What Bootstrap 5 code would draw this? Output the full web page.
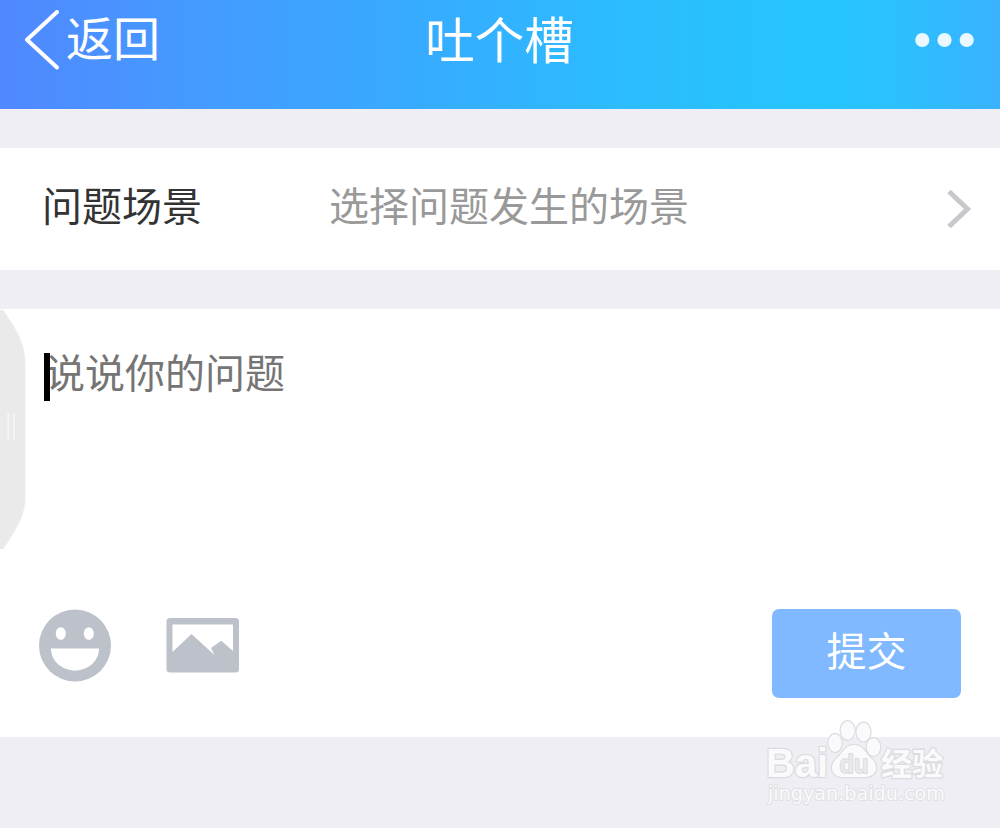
<!DOCTYPE html>
<html lang="zh-CN">
<head>
  <meta charset="UTF-8">
  <title>吐个槽</title>
  <meta name="viewport" content="width=device-width, initial-scale=1" />
  <!-- Bootstrap CSS -->
  <link rel="stylesheet" href="https://cdn.jsdelivr.net/npm/bootstrap@5.3.0/dist/css/bootstrap.min.css">
  <style>
    body {
      background-color: #efeef4;
      font-family: "Noto Sans CJK SC", sans-serif;
      font-size: 40px;
      line-height: 60px;
      min-height: 828px;
      overflow: hidden;
    }
    .topbar {
      height: 109px;
      padding: 10px 25px 39px 24px;
      color: #fff;
      background: linear-gradient(90deg, #5088ff 0%, #4698ff 17%, #38aaff 40%, #2cbcff 62%, #25c5ff 82%, #2bc1ff 89%, #3ab2ff 100%);
    }
    .back-link {
      font-size: 47px;
      line-height: 51px;
      gap: 6px;
    }
    .topbar-title {
      font-size: 49.5px;
      line-height: 55px;
    }
    .scene-row {
      height: 122px;
      margin-top: 39px;
      padding: 0 28px 0 42px;
      color: #333;
    }
    .scene-label { width: 287px; padding-bottom: 11px; }
    .scene-value { color: #999; padding-bottom: 11px; }
    .feedback-box {
      height: 428px;
      margin-top: 39px;
      padding: 32px 39px 39px;
    }
    .feedback-text { color: #757575; padding-left: 6px; }
    .caret {
      left: 5px;
      top: 12px;
      width: 6px;
      height: 48px;
      background: #000;
    }
    .btn-submit {
      width: 189px;
      height: 89px;
      padding: 0 0 10px;
      border: 0;
      border-radius: 7px;
      font-size: 40px;
      color: #fff;
      background-color: #80b9ff;
    }
    .side-handle { left: 0; top: 0; }
    .watermark { left: 760px; top: 715px; }
  </style>
</head>
<body class="position-relative">

<!-- Top bar -->
<nav class="topbar row g-0 align-items-start">
  <div class="col d-flex align-items-start back-link">
    <svg width="36" height="60" viewBox="0 0 36 60" fill="none" stroke="#fff" stroke-width="4" stroke-linecap="round" stroke-linejoin="round"><path d="M33 2 L3 29.7 L33 57.5"/></svg>
    <span>返回</span>
  </div>
  <div class="col-auto topbar-title">吐个槽</div>
  <div class="col text-end d-flex justify-content-end">
    <svg width="60" height="60" viewBox="0 0 60 60" fill="#ebf8ff"><circle cx="7.3" cy="30" r="7.1"/><circle cx="29.5" cy="30" r="7.1"/><circle cx="51.7" cy="30" r="7.1"/></svg>
  </div>
</nav>

<!-- Scene picker -->
<div class="scene-row bg-white d-flex align-items-center">
  <div class="scene-label">问题场景</div>
  <div class="scene-value flex-grow-1">选择问题发生的场景</div>
  <svg width="25" height="40" viewBox="0 0 25 40" fill="none" stroke="#c7c7cc" stroke-width="5"><path d="M2 2.5 L20.5 20 L2 37.5"/></svg>
</div>

<!-- Feedback form -->
<div class="feedback-box bg-white d-flex flex-column justify-content-between position-relative">
  <svg class="side-handle position-absolute" width="32" height="242" viewBox="0 0 32 242">
    <path d="M0 2 H4 C14 17 26 32 26 54 V188 C26 208 15 223 4 240 H0 Z" fill="#f7f7f7"/>
    <path d="M0 1 H3 C13 16 25 32 25 54 V188 C25 208 14 223 3 240 H0 Z" fill="#eaeaea"/>
    <path d="M8.3 104 V131 M14 104 V131" stroke="#f4f4f4" stroke-width="2"/>
  </svg>
  <div class="feedback-text position-relative">
    <span class="caret position-absolute"></span>说说你的问题
  </div>
  <div class="d-flex align-items-start">
    <svg class="me-auto" width="201" height="74" viewBox="0 0 201 74" fill="#bdc2ca">
      <circle cx="36" cy="36.5" r="36"/>
      <ellipse cx="21.8" cy="24.5" rx="5" ry="6.3" fill="#fff"/>
      <ellipse cx="49.8" cy="24.5" rx="5" ry="6.3" fill="#fff"/>
      <path d="M12 39.5 H60 C60 52 49 61.5 36 61.5 C23 61.5 12 52 12 39.5 Z" fill="#fff"/>
      <rect x="127.5" y="9" width="72.5" height="54.5" rx="3.5"/>
      <path d="M133.5 15.5 H194 V42 L182.2 31.8 L172 39 L175.5 46 L152.5 25 L133.5 43 Z" fill="#fff"/>
    </svg>
    <button type="button" class="btn btn-submit">提交</button>
  </div>
</div>

<!-- Watermark -->
<svg class="watermark position-absolute" width="210" height="110" viewBox="0 0 210 110" fill="#fafafc" stroke="#dcdce0" stroke-width="2.6" stroke-linejoin="round" paint-order="stroke" font-family="'Liberation Sans', sans-serif">
  <g stroke-width="2.4">
    <ellipse cx="75" cy="28" rx="6.6" ry="9"/>
    <ellipse cx="87.7" cy="15.5" rx="7" ry="9.3"/>
    <ellipse cx="103.5" cy="17" rx="7" ry="9.3"/>
    <ellipse cx="113.5" cy="32" rx="6.7" ry="8.7"/>
    <path d="M94 30 C103 30 106 39 112 44 C120 52 116 62 105 62 C99 62 89 62 83 62 C71 62 69 51 76 44 C82 39 85 30 94 30 Z"/>
  </g>
  <text x="6" y="61.5" font-size="41" font-weight="700" textLength="62" lengthAdjust="spacingAndGlyphs">Bai</text>
  <text x="79.5" y="57.5" font-size="25" font-weight="700" fill="#e9e9ed" stroke="#d4d4d8" stroke-width="1.5" textLength="29" lengthAdjust="spacingAndGlyphs">du</text>
  <text x="121" y="59.5" font-size="31" font-weight="700" font-family="'Noto Sans CJK SC', sans-serif" textLength="62" lengthAdjust="spacingAndGlyphs">经验</text>
  <text x="8" y="85" font-size="19.5" stroke="#e0e0e4" stroke-width="2" font-family="'DejaVu Sans', sans-serif" textLength="177" lengthAdjust="spacingAndGlyphs">jingyan.baidu.com</text>
</svg>

<!-- Bootstrap JS -->
<script src="https://cdn.jsdelivr.net/npm/bootstrap@5.3.0/dist/js/bootstrap.bundle.min.js"></script>
</body>
</html>
